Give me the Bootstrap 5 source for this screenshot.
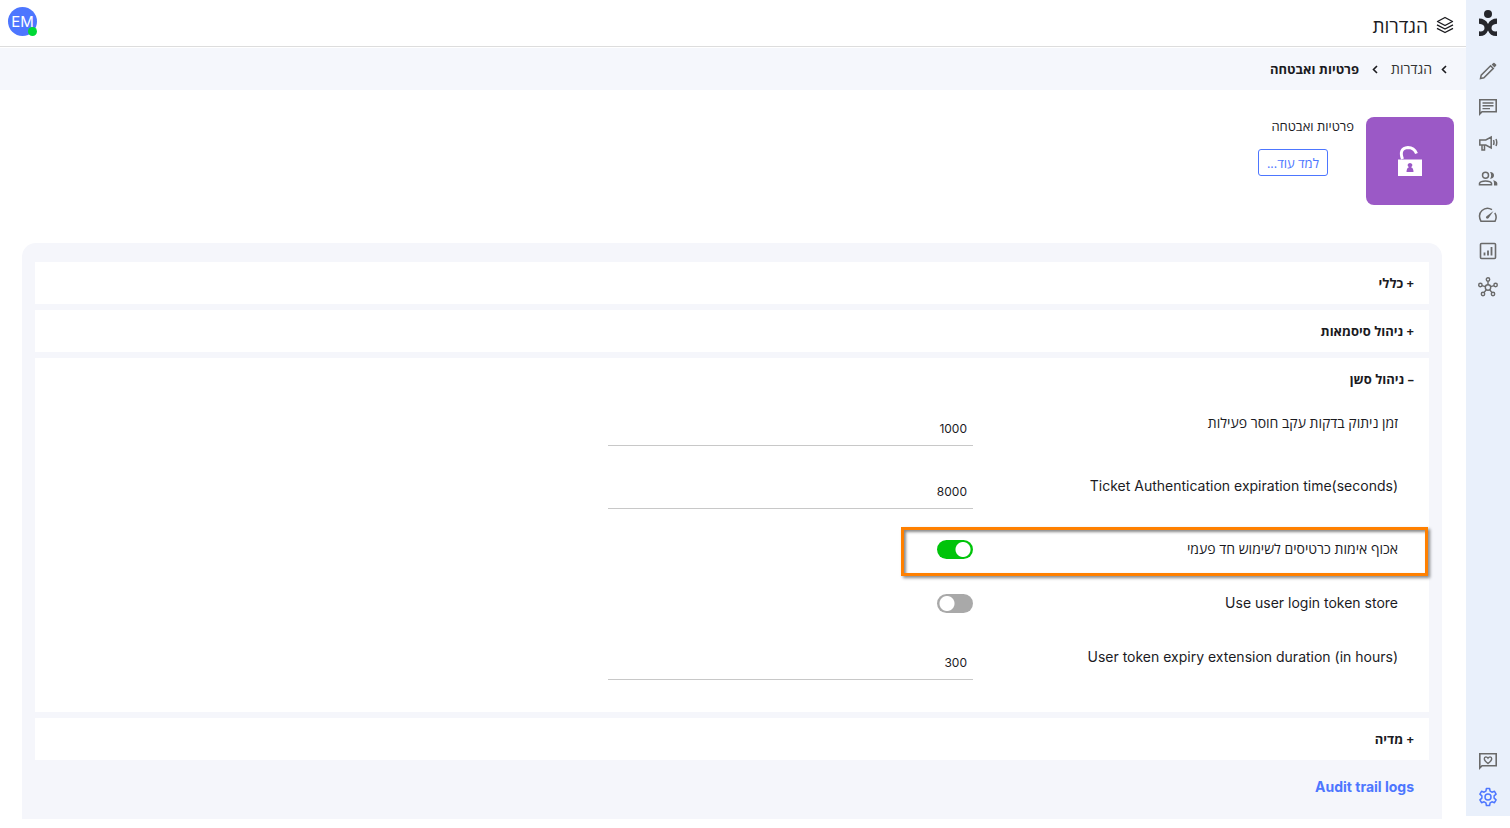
<!DOCTYPE html>
<html lang="he" dir="rtl">
<head>
<meta charset="utf-8">
<meta name="viewport" content="width=device-width, initial-scale=1">
<title>הגדרות</title>
<link href="https://cdn.jsdelivr.net/npm/bootstrap@5.3.0/dist/css/bootstrap.min.css" rel="stylesheet">
<style>
  body { font-family: "Open Sans", "Liberation Sans", sans-serif; font-size: 13px; line-height: 22px; color: #1b1b1f; background: #fff; }
  .en { font-family: Inter, sans-serif; }
  a { text-decoration: none; }
  svg { display: block; fill: none; stroke: currentColor; }
  .app { height: 100vh; overflow: hidden; }
  .side { width: 44px; margin-bottom: 12px; padding: 8px 0 1px; background: #e9f0fb; color: #6a6a6a; }
  .side a { display: flex; align-items: center; justify-content: center; height: 36px; color: inherit; }
  .side .brand { height: 30px; margin-bottom: 15px; color: #25262b; }
  .side .current { color: #4d76ff; }
  .topbar { height: 47px; padding: 0 12px 0 8px; border-bottom: 1px solid #ddd; }
  .topbar h1 { font-size: 19px; line-height: 24px; padding-top: 6px; }
  .avatar { width: 29px; height: 29px; margin-top: -3px; background: #4d76ff; color: #fff; font-size: 15px; }
  .status { right: 0; bottom: 0; width: 9px; height: 9px; background: #00d936; }
  .crumbs { height: 42px; margin-top: 1px; padding: 0 18px; background: #f5f7fc; }
  .crumbs a { padding: 0 8px; color: #333; font-size: 14px; }
  .hero { padding: 27px 12px 38px; }
  .tile { width: 88px; height: 88px; border-radius: 8px; background: #9b59c6; color: #fff; }
  .hero h2 { margin-bottom: 14px; font-size: 13px; line-height: 18px; }
  .learn { height: 27px; padding: 0 8px; margin-right: 26px; border: 1px solid #4d76ff; border-radius: 3px; color: #4d76ff; background: #fff; line-height: 24px; }
  .panel { margin: 0 24px 9px 22px; padding: 19px 13px 0; border-radius: 14px 14px 0 0; background: #f5f6fb; }
  .fold { background: #fff; margin-bottom: 6px; }
  .fold-head { width: 100%; height: 42px; padding: 0 15px; border: 0; background: none; font-weight: 700; text-align: right; color: #1b1b1f; }
  .fields { padding: 12px 31px 3px; }
  .setting { display: grid; grid-template-columns: 425fr 365fr 542fr; align-items: start; min-height: 63px; position: relative; }
  .setting.switchrow { min-height: 54px; }
  .setting label { font-size: 14px; }
  .line { width: 100%; height: 34px; padding: 0 6px; border: 0; border-bottom: 1px solid #c8c8c8; border-radius: 0; background: none; font-size: 12px; color: #1b1b1f; text-align: right; }
  .toggle { appearance: none; width: 36px; height: 19px; margin: 2px 0 0; border-radius: 10px; background: radial-gradient(circle at 10px 50%, #fff 7px, transparent 8px) #a9a9a9; }
  .toggle:checked { background: radial-gradient(circle at 26px 50%, #fff 7px, transparent 8px) #00c40a; }
  .callout { position: absolute; top: -11px; bottom: 16px; right: -30px; left: 62.7%; border: 3px solid #ff8000; box-shadow: 2px 2px 3px #0007, inset 2px 2px 3px #0007; pointer-events: none; }
  .audit { padding: 0 15px; margin-top: 16px; font-size: 14px; font-weight: 700; color: #4d76ff; }
</style>
</head>
<body>
<div class="app d-flex">
  <nav class="side d-flex flex-column flex-shrink-0" aria-label="ראשי">
    <a class="brand" href="#" aria-label="דף הבית"><svg width="20" height="28" viewBox="0 0 20 28"><g fill="currentColor" stroke="none"><circle cx="10" cy="5" r="4"/><path d="M1 9.500q6.500 0 9 5.500 2.500-5.500 9-5.500v5.200q-5.500.3-5.500 4.300t5.500 3.300V27q-6.500.5-9-5.500-2.500 6-9 5.500v-4.700q5.500.7 5.500-3.300T1 14.700z"/></g></svg></a>
    <a href="#" aria-label="עריכה"><svg width="18" height="18" viewBox="0 0 18 18" stroke-width="1.500"><path d="M1.500 16.500l.7-3.400L11.600 3.700l2.700 2.700L4.900 15.800z"/><path d="M12.600 2.600l1.700-1.700q.6-.5 1.200 0l1.600 1.600q.5.600 0 1.200l-1.700 1.700z" fill="currentColor" stroke="none"/></svg></a>
    <a href="#" aria-label="הודעות"><svg width="20" height="18" viewBox="0 0 20 18" stroke-width="1.600"><path d="M1.800 16V1.800h16.400v12H4z"/><path d="M4.500 5h11M4.500 7.800h11M4.500 10.600h7.500" stroke-width="1.400"/></svg></a>
    <a href="#" aria-label="קמפיינים"><svg width="20" height="16" viewBox="0 0 20 16" stroke-width="1.500"><path d="M1.800 5h6L13.200 2v11L7.800 10h-6zM4 10v5h2.500v-5"/><path d="M15.500 5q1 2.500 0 5M18 4q1.500 3.500 0 7"/></svg></a>
    <a href="#" aria-label="אנשי קשר"><svg width="20" height="16" viewBox="0 0 20 16" stroke-width="1.500"><circle cx="7.500" cy="4.300" r="3"/><path d="M1.500 13.800v-1.500q1-2.400 6-2.400t6 2.400v1.500z"/><path d="M12 .9q4 .2 4 3.400t-4 3.500q2.300-3.500 0-6.900zM15 9.300q4 .8 4.300 3v2.200H16v-2.200q0-1.800-1-3z" fill="currentColor" stroke="none"/></svg></a>
    <a href="#" aria-label="לוח מחוונים"><svg width="20" height="16" viewBox="0 0 20 16" stroke-width="1.500"><path d="M14 2.600Q8.500-.6 4 3.500T3 14.300h14q2.400-4.300-.2-8.400"/><path d="M8.500 9.200L15.500 4l-5 7.200q-1.500 1-2.300-.1t.3-1.900z" fill="currentColor" stroke="none"/></svg></a>
    <a href="#" aria-label="דוחות"><svg width="18" height="18" viewBox="0 0 18 18" stroke-width="1.600"><rect x="1.500" y="1.500" width="15" height="15" rx="1"/><path d="M5.500 13.500v-3M9 13.500V8.500M12.500 13.500V5" stroke-width="1.800"/></svg></a>
    <a href="#" aria-label="חיבורים"><svg width="20" height="20" viewBox="0 0 20 20" stroke-width="1.400"><circle cx="10" cy="10.500" r="2.700"/><circle cx="10" cy="2.500" r="1.700"/><circle cx="2.400" cy="8" r="1.700"/><circle cx="17.600" cy="8" r="1.700"/><circle cx="5" cy="17" r="1.700"/><circle cx="15" cy="17" r="1.700"/><path d="M10 4.200v3.600M4 8.600l3.400 1.100M16 8.600l-3.400 1.100M6 15.600l2.300-2.900M14 15.600l-2.300-2.900"/></svg></a>
    <a class="mt-auto" href="#" aria-label="משוב"><svg width="20" height="18" viewBox="0 0 20 18" stroke-width="1.600"><path d="M1.800 16V1.800h16.400v12H4z"/><path d="M10 11.500Q6.300 8.600 6.300 6.700q0-1.700 1.600-1.800 1.300 0 2.100 1.300.8-1.300 2.100-1.300 1.600.1 1.600 1.800 0 1.900-3.700 4.800z" stroke-width="1.400"/></svg></a>
    <a class="current" href="#" aria-label="הגדרות"><svg width="20" height="20" viewBox="0 0 20 20" stroke-width="1.500" stroke-linejoin="round"><circle cx="10" cy="10" r="3"/><path d="M8.400 1.500h3.200l.5 2.700 1.800 1 2.600-.9 1.600 2.800-2 1.800v2.200l2 1.800-1.600 2.800-2.600-.9-1.800 1-.5 2.700H8.400l-.5-2.700-1.800-1-2.600.9-1.600-2.800 2-1.800V8.900l-2-1.800 1.600-2.800 2.600.9 1.800-1z"/></svg></a>
  </nav>

  <div class="flex-grow-1 d-flex flex-column" style="min-width:0">
    <header class="topbar d-flex align-items-center justify-content-between flex-shrink-0">
      <div class="d-flex align-items-center gap-2">
        <svg class="mt-1" width="18" height="18" viewBox="0 0 18 18" stroke-width="1.400" stroke-linejoin="round"><path d="M9 1.500L16.500 5.500 9 9.500 1.500 5.500zM1 8.800l8 4.200 8-4.200M1 12.300l8 4.200 8-4.200"/></svg>
        <h1 class="m-0 fw-normal">הגדרות</h1>
      </div>
      <button class="avatar en border-0 rounded-circle p-0 position-relative d-flex align-items-center justify-content-center" type="button">EM<span class="status position-absolute rounded-circle"></span></button>
    </header>
    <nav class="crumbs d-flex align-items-center flex-shrink-0" aria-label="נתיב">
      <svg width="8" height="9" viewBox="0 0 8 9" stroke-width="1.600"><path d="M6 1L2.500 4.500 6 8"/></svg>
      <a href="#">הגדרות</a>
      <svg class="mx-1" width="8" height="9" viewBox="0 0 8 9" stroke-width="1.600"><path d="M6 1L2.500 4.500 6 8"/></svg>
      <strong class="px-2">פרטיות ואבטחה</strong>
    </nav>

    <main class="flex-grow-1 d-flex flex-column" style="min-height:0">
      <section class="hero d-flex flex-shrink-0">
        <div class="tile d-flex align-items-center justify-content-center"><svg width="26" height="32" viewBox="0 0 26 32"><path d="M5.500 14Q1.500 3.500 11 2.500q6 0 8.500 6" stroke-width="3"/><path d="M1 14.500h24V31H1z" fill="currentColor" stroke="none"/><path d="M9.500 27q0-4 2.500-4.800-1.800-1-1.300-2.700Q11.300 18 13 18t2.300 1.500q.5 1.700-1.300 2.700 2.500.8 2.500 4.800z" fill="#9b59c6" stroke="none"/></svg></div>
        <div class="px-2 mx-1">
          <h2 class="fw-normal">פרטיות ואבטחה</h2>
          <button class="learn" type="button">למד עוד...</button>
        </div>
      </section>

      <section class="panel flex-grow-1">
        <div class="fold"><button class="fold-head" type="button" aria-expanded="false">+ כללי</button></div>
        <div class="fold"><button class="fold-head" type="button" aria-expanded="false">+ ניהול סיסמאות</button></div>
        <div class="fold">
          <button class="fold-head" type="button" aria-expanded="true">– ניהול סשן</button>
          <div class="fields">
            <div class="setting"><label for="idle">זמן ניתוק בדקות עקב חוסר פעילות</label><input class="line en" id="idle" type="text" value="1000"></div>
            <div class="setting"><label class="en" for="ticket"><bdi dir="ltr">Ticket Authentication expiration time(seconds)</bdi></label><input class="line en" id="ticket" type="text" value="8000"></div>
            <div class="setting switchrow"><label for="single">אכוף אימות כרטיסים לשימוש חד פעמי</label><div class="d-flex"><input class="toggle" id="single" type="checkbox" role="switch" checked></div><div class="callout"></div></div>
            <div class="setting switchrow"><label class="en" for="store">Use user login token store</label><div class="d-flex"><input class="toggle" id="store" type="checkbox" role="switch"></div></div>
            <div class="setting"><label class="en" for="expiry"><bdi dir="ltr">User token expiry extension duration (in hours)</bdi></label><input class="line en" id="expiry" type="text" value="300"></div>
          </div>
        </div>
        <div class="fold"><button class="fold-head" type="button" aria-expanded="false">+ מדיה</button></div>
        <a class="audit en d-block" href="#">Audit trail logs</a>
      </section>
    </main>
  </div>
</div>
<script src="https://cdn.jsdelivr.net/npm/bootstrap@5.3.0/dist/js/bootstrap.bundle.min.js"></script>
</body>
</html>
